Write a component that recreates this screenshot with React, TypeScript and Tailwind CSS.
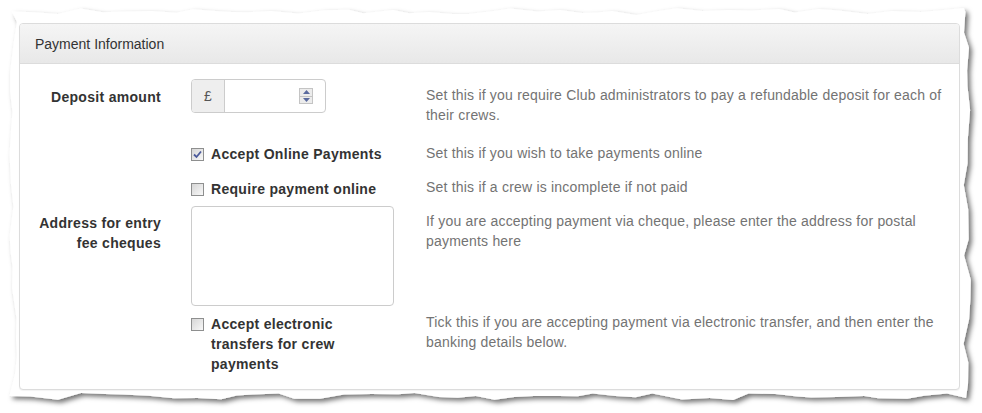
import React from 'react'

// torn paper outline, generated once from a fixed seed
function makeRand(seed: number) {
    let a = seed
    return () => {
        a |= 0
        a = (a + 0x6d2b79f5) | 0
        let t = Math.imul(a ^ (a >>> 15), 1 | a)
        t = (t + Math.imul(t ^ (t >>> 7), 61 | t)) ^ t
        return ((t ^ (t >>> 14)) >>> 0) / 4294967296
    }
}

function tornPath() {
    const r = makeRand(11)
    const pts: string[] = []
    for (let x = 12; x < 966; x += 14 + r() * 16) pts.push(`${x.toFixed(1)},${(8 + r() * 7).toFixed(1)}`)
    for (let y = 12; y < 394; y += 14 + r() * 16) pts.push(`${(963 + r() * 8).toFixed(1)},${y.toFixed(1)}`)
    for (let x = 966; x > 12; x -= 14 + r() * 16) pts.push(`${x.toFixed(1)},${(393 + r() * 7).toFixed(1)}`)
    for (let y = 396; y > 12; y -= 14 + r() * 16) pts.push(`${(9 + r() * 8).toFixed(1)},${y.toFixed(1)}`)
    return 'M' + pts.join(' L') + ' Z'
}

const PAPER = tornPath()

function Checkbox({ checked }: { checked?: boolean }) {
    return (
        <span className="mt-[4px] w-[13px] h-[13px] shrink-0 border border-[#8e8f8f] bg-gradient-to-br from-[#d6d6d6] to-[#f8f8f8] flex items-center justify-center">
            {checked && (
                <svg width="9" height="9" viewBox="0 0 9 9">
                    <path d="M1 4.5 L3.5 7 L8 1.5" fill="none" stroke="#4b5a9b" strokeWidth="1.8" />
                </svg>
            )}
        </span>
    )
}

function Spinner() {
    return (
        <span className="flex flex-col w-[14px] h-[16px] border border-[#c4c4c4] bg-[#ececec]">
            <span className="flex-1 flex items-center justify-center border-b border-[#c4c4c4]">
                <svg width="7" height="4" viewBox="0 0 7 4"><path d="M0 4 L3.5 0 L7 4 Z" fill="#5a6a9e" /></svg>
            </span>
            <span className="flex-1 flex items-center justify-center">
                <svg width="7" height="4" viewBox="0 0 7 4"><path d="M0 0 L3.5 4 L7 0 Z" fill="#5a6a9e" /></svg>
            </span>
        </span>
    )
}

export default function App() {
    return (
        <div className="relative w-[982px] h-[413px] bg-white overflow-hidden font-['Liberation_Sans',Arial,sans-serif] text-[14px] leading-[20px] text-[#333]">
            {/* paper background */}
            <svg className="absolute inset-0" width="982" height="413" viewBox="0 0 982 413">
                <defs>
                    <filter id="shadow" x="-5%" y="-5%" width="110%" height="115%">
                        <feDropShadow dx="3" dy="3" stdDeviation="2.5" floodColor="#000" floodOpacity="0.55" />
                    </filter>
                </defs>
                <path d={PAPER} fill="#fff" filter="url(#shadow)" />
            </svg>

            {/* Panel */}
            <div className="relative ml-[19px] mt-[23px] w-[941px] border border-[#dcdcdc] rounded-[4px] bg-white shadow-[0_1px_1px_rgba(0,0,0,0.05)]">
                <div className="h-[40px] px-[15px] flex items-center bg-gradient-to-b from-[#f5f5f5] to-[#e8e8e8] border-b border-[#dcdcdc] rounded-t-[3px]">
                    <span className="text-[14px] text-[#333]">Payment Information</span>
                </div>

                <div className="pt-[15px] pb-[15px] flex flex-col tracking-[0.2px]">
                    {/* Deposit amount */}
                    <div className="grid grid-cols-[156px_235px_1fr]">
                        <label className="pt-[8px] pr-[15px] text-right font-bold tracking-[0.3px]">Deposit amount</label>
                        <div className="px-[15px]">
                            <div className="w-[135px] h-[34px] flex border border-[#ccc] rounded-[4px] overflow-hidden">
                                <span className="w-[33px] flex items-center justify-center bg-[#eee] border-r border-[#ccc] text-[#555]">£</span>
                                <span className="flex-1 flex items-center justify-end pr-[12px]">
                                    <Spinner />
                                </span>
                            </div>
                        </div>
                        <p className="pt-[6px] pl-[15px] pr-[15px] text-[#737373]">
                            Set this if you require Club administrators to pay a refundable deposit for each of their crews.
                        </p>
                    </div>

                    {/* Accept online */}
                    <div className="mt-[19px] grid grid-cols-[156px_235px_1fr]">
                        <div />
                        <label className="px-[15px] flex gap-[7px] font-bold tracking-[0.3px]">
                            <Checkbox checked />
                            <span>Accept Online Payments</span>
                        </label>
                        <p className="-mt-[1px] px-[15px] text-[#737373]">Set this if you wish to take payments online</p>
                    </div>

                    {/* Require payment */}
                    <div className="mt-[15px] grid grid-cols-[156px_235px_1fr]">
                        <div />
                        <label className="px-[15px] flex gap-[7px] font-bold tracking-[0.3px]">
                            <Checkbox />
                            <span>Require payment online</span>
                        </label>
                        <p className="-mt-[2px] px-[15px] text-[#737373]">Set this if a crew is incomplete if not paid</p>
                    </div>

                    {/* Address */}
                    <div className="mt-[7px] grid grid-cols-[156px_235px_1fr]">
                        <label className="pt-[7px] pl-[10px] pr-[15px] text-right font-bold tracking-[0.3px]">Address for entry fee cheques</label>
                        <div className="px-[15px]">
                            <div className="w-[203px] h-[100px] border border-[#ccc] rounded-[4px]" />
                        </div>
                        <p className="pt-[5px] px-[15px] text-[#737373]">
                            If you are accepting payment via cheque, please enter the address for postal payments here
                        </p>
                    </div>

                    {/* Electronic transfers */}
                    <div className="mt-[8px] grid grid-cols-[156px_235px_1fr]">
                        <div />
                        <label className="px-[15px] flex gap-[7px] font-bold tracking-[0.3px]">
                            <Checkbox />
                            <span className="w-[150px]">Accept electronic transfers for crew payments</span>
                        </label>
                        <p className="-mt-[2px] px-[15px] text-[#737373]">
                            Tick this if you are accepting payment via electronic transfer, and then enter the banking details below.
                        </p>
                    </div>
                </div>
            </div>
        </div>
    )
}
